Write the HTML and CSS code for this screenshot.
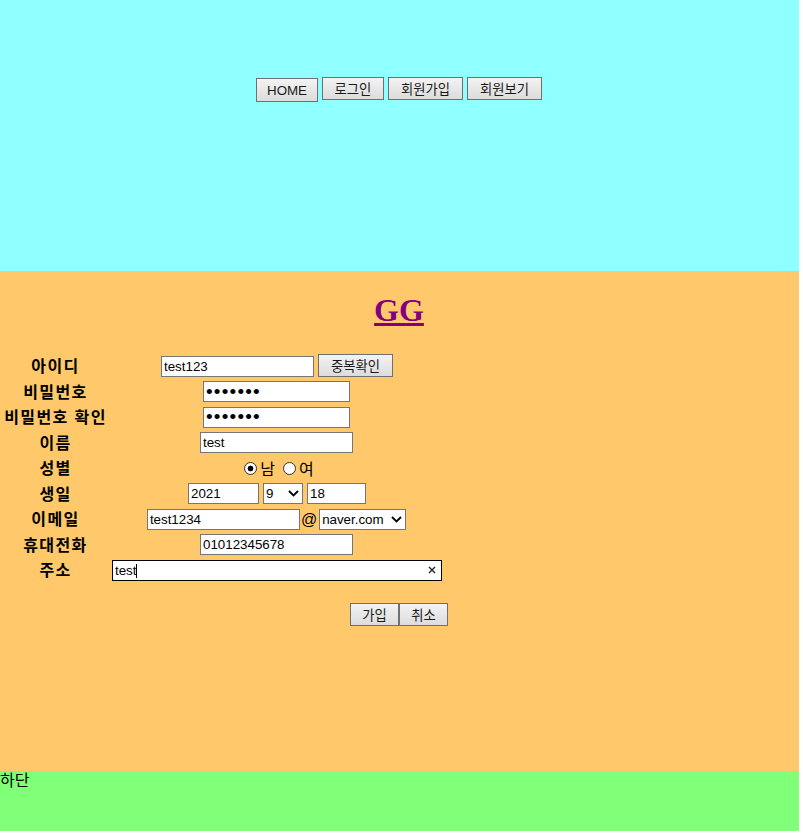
FILE: index.html
```html
<!DOCTYPE html>
<html lang="ko">
<head>
<meta charset="utf-8">
<title>GG</title>
<link rel="stylesheet" href="styles.css">
</head>
<body>
<div class="page">
  <header class="top">
    <nav class="nav">
      <button class="btn home w62" type="button">HOME</button>
      <button class="btn w62" type="button">로그인</button>
      <button class="btn w75" type="button">회원가입</button>
      <button class="btn w75" type="button">회원보기</button>
    </nav>
  </header>
  <section class="main">
    <h1 class="title"><a href="#">GG</a></h1>
    <form class="join">
      <table class="form">
        <tr>
          <th>아이디</th>
          <td><div class="field"><input class="txt" type="text" value="test123"><button class="btn w75" type="button">중복확인</button></div></td>
        </tr>
        <tr>
          <th>비밀번호</th>
          <td><div class="field one"><input class="txt pw" type="password" value="1234567"></div></td>
        </tr>
        <tr>
          <th>비밀번호 확인</th>
          <td><div class="field one"><input class="txt pw" type="password" value="1234567"></div></td>
        </tr>
        <tr>
          <th>이름</th>
          <td><div class="field one"><input class="txt" type="text" value="test"></div></td>
        </tr>
        <tr>
          <th>성별</th>
          <td><div class="field radios"><input class="radio" type="radio" name="g" checked><span class="rlabel">남</span><input class="radio second" type="radio" name="g"><span class="rlabel">여</span></div></td>
        </tr>
        <tr>
          <th>생일</th>
          <td><div class="field"><input class="txt year" type="text" value="2021"><span class="sel"><select class="select month"><option>9</option></select><svg class="chev" viewBox="0 0 11 7" width="11" height="7"><path d="M1 1 L5.5 5.5 L10 1" fill="none" stroke="#000" stroke-width="1.8"/></svg></span><input class="txt day" type="text" value="18"></div></td>
        </tr>
        <tr>
          <th>이메일</th>
          <td><div class="field tight"><input class="txt" type="text" value="test1234"><span class="at">@</span><span class="sel"><select class="select mail"><option>naver.com</option></select><svg class="chev" viewBox="0 0 11 7" width="11" height="7"><path d="M1 1 L5.5 5.5 L10 1" fill="none" stroke="#000" stroke-width="1.8"/></svg></span></div></td>
        </tr>
        <tr>
          <th>휴대전화</th>
          <td><div class="field one"><input class="txt" type="text" value="01012345678"></div></td>
        </tr>
        <tr>
          <th>주소</th>
          <td><div class="field"><div class="search"><input class="addr" type="text" value="test"><span class="caret"></span><svg class="clear" viewBox="0 0 8 8" width="8" height="8"><path d="M1 1 L7 7 M7 1 L1 7" fill="none" stroke="#222" stroke-width="1.4"/></svg></div></div></td>
        </tr>
      </table>
      <div class="actions">
        <button class="btn w49" type="submit">가입</button><button class="btn w49" type="reset">취소</button>
      </div>
    </form>
  </section>
  <footer class="bottom">하단</footer>
</div>
</body>
</html>
```
FILE: styles.css
```css
html, body {
  margin: 0;
  padding: 0;
  background: #ffffff;
}

body {
  font-family: "Noto Sans CJK KR", sans-serif;
  color: #000;
}

.page {
  width: 799px;
}

/* header */
.top {
  height: 271px;
  box-sizing: border-box;
  padding-top: 77px;
  background: #8fffff;
}

.nav {
  display: flex;
  justify-content: center;
  align-items: flex-start;
  gap: 4px;
  padding-right: 1px;
}

.btn {
  box-sizing: border-box;
  height: 23px;
  padding: 0;
  margin: 0;
  border: 1px solid #707070;
  border-radius: 0;
  background: linear-gradient(#f3f3f3, #dcdcdc);
  font: 13.33px "Liberation Sans", "Noto Sans CJK KR", sans-serif;
  color: #1a1a1a;
  text-align: center;
}

.home {
  height: 24px;
  margin-top: 1px;
}

.w62 { width: 62px; }
.w75 { width: 75px; }
.w49 { width: 49px; }

/* main */
.main {
  display: flow-root;
  height: 500px;
  background: #ffc86b;
}

.title {
  margin: 21.44px 0;
  padding-right: 1px;
  font: 700 32px "Liberation Serif", serif;
  text-align: center;
}

.title a {
  color: #800080;
  text-decoration: underline;
}

.form {
  border-spacing: 2px;
  margin: 0;
}

.form th {
  width: 105px;
  padding: 1px;
  font: 700 16px "Noto Sans CJK KR", sans-serif;
  line-height: 21.5px;
  letter-spacing: 1.4px;
  text-align: center;
  white-space: nowrap;
}

.form td {
  width: 330px;
  padding: 1px;
  vertical-align: middle;
}

.field {
  display: flex;
  justify-content: center;
  align-items: flex-end;
  gap: 4px;
}

.field.one {
  padding-right: 1px;
}

.field.tight {
  gap: 0;
  align-items: center;
  padding-right: 1px;
}

.txt {
  box-sizing: border-box;
  width: 153px;
  height: 21px;
  margin: 0;
  padding: 1px 2px;
  border: 1px solid #767676;
  border-radius: 0;
  background: #fff;
  font: 13.33px "Liberation Sans", sans-serif;
  color: #000;
}

.pw {
  width: 147px;
  padding: 0 2px;
  font-size: 19px;
  letter-spacing: 1.2px;
}

.year { width: 71px; }
.day { width: 59px; }

.sel {
  position: relative;
  display: inline-flex;
}

.select {
  -webkit-appearance: none;
  appearance: none;
  box-sizing: border-box;
  height: 21px;
  margin: 0;
  padding: 0 0 0 2px;
  border: 1px solid #767676;
  border-radius: 0;
  background: #fff;
  font: 13.33px "Liberation Sans", sans-serif;
  color: #000;
}

.month { width: 40px; }
.mail { width: 87px; }

.chev {
  position: absolute;
  right: 4px;
  top: 7px;
  pointer-events: none;
}

.at {
  margin: 0 2px 0 1px;
  font: 16px "Liberation Sans", sans-serif;
  line-height: 21px;
}

.radios {
  align-items: center;
  gap: 0;
  padding-left: 4px;
}

.radio {
  -webkit-appearance: none;
  appearance: none;
  box-sizing: border-box;
  width: 13px;
  height: 13px;
  margin: 0;
  border: 1px solid #333;
  border-radius: 50%;
  background: #fff;
}

.radio:checked {
  background: radial-gradient(circle, #000 0 2.6px, #fff 3.2px);
}

.radio.second {
  margin-left: 8px;
}

.rlabel {
  margin-left: 3px;
  font: 16px "Noto Sans CJK KR", sans-serif;
  line-height: 21px;
}

.search {
  position: relative;
  box-sizing: border-box;
  display: flex;
  align-items: center;
  width: 330px;
  height: 21px;
  border: 1px solid #000;
  background: #fff;
}

.addr {
  flex: 1;
  min-width: 0;
  height: 19px;
  margin: 0;
  padding: 0 2px;
  border: 0;
  outline: none;
  background: transparent;
  font: 13.33px "Liberation Sans", sans-serif;
  color: #000;
}

.caret {
  position: absolute;
  left: 23px;
  top: 3px;
  width: 1px;
  height: 14px;
  background: #000;
}

.clear {
  margin-right: 5px;
  flex: none;
}

.actions {
  display: flex;
  justify-content: center;
  margin-top: 19px;
  padding-right: 1px;
}

/* footer */
.bottom {
  height: 60px;
  background: #80ff78;
  font: 16px "Noto Sans CJK KR", sans-serif;
  line-height: 16px;
}
```
